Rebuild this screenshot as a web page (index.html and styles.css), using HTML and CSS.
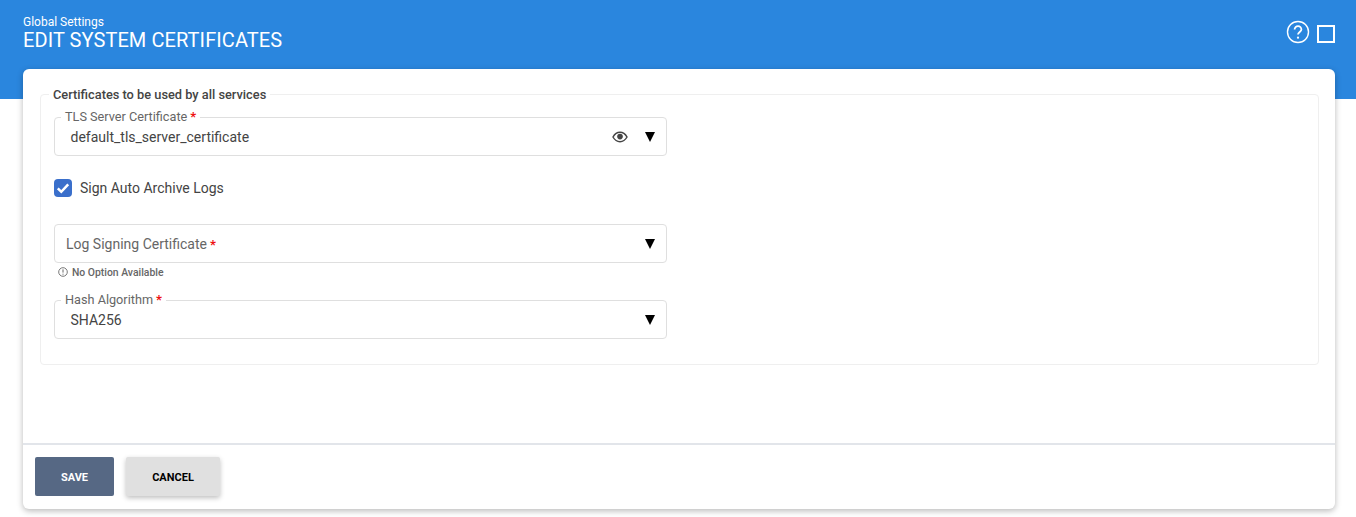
FILE: index.html
```html
<!DOCTYPE html>
<html lang="en">
<head>
<meta charset="utf-8">
<title>Edit System Certificates</title>
<link rel="stylesheet" href="styles.css">
</head>
<body>
<header class="banner">
  <div class="titles">
    <div class="crumb">Global Settings</div>
    <h1 class="title">EDIT SYSTEM CERTIFICATES</h1>
  </div>
  <div class="banner-icons">
    <svg class="help" width="24" height="24" viewBox="0 0 24 24" fill="none" stroke="#fff">
      <circle cx="12" cy="12" r="10.5" stroke-width="1.4"/>
      <path d="M8.6 9.6a3.4 3.4 0 0 1 6.8 0c0 2.3-3.4 2.6-3.4 5" stroke-width="1.8"/>
      <circle cx="12" cy="17.7" r="1.1" fill="#fff" stroke="none"/>
    </svg>
    <span class="maximize"></span>
  </div>
</header>
<main class="card">
  <div class="card-body">
    <section class="group">
      <span class="group-label">Certificates to be used by all services</span>
      <div class="field">
        <span class="float-label">TLS Server Certificate<b class="req">*</b></span>
        <span class="value">default_tls_server_certificate</span>
        <svg class="eye" width="16" height="12" viewBox="0 0 16 12">
          <path d="M1 6C2.800 2.800 5.200 1.300 8 1.300S13.200 2.800 15 6c-1.800 3.200-4.200 4.700-7 4.700S2.800 9.200 1 6Z" fill="none" stroke="#444" stroke-width="1.500"/>
          <circle cx="8" cy="5.600" r="2.800" fill="#444"/>
        </svg>
        <span class="caret"></span>
      </div>
      <label class="check-row">
        <span class="checkbox">
          <svg width="18" height="18" viewBox="0 0 18 18" fill="none"><path d="M3.800 9.300l3.500 3.500L14.200 5.400" stroke="#fff" stroke-width="2.500"/></svg>
        </span>
        <span>Sign Auto Archive Logs</span>
      </label>
      <div class="field field-empty">
        <span class="placeholder">Log Signing Certificate<b class="req">*</b></span>
        <span class="caret"></span>
      </div>
      <div class="hint">
        <svg width="10" height="10" viewBox="0 0 10 10" fill="none">
          <circle cx="5" cy="5" r="4.300" stroke="#555" stroke-width=".8"/>
          <path d="M5 2.400v3.200M5 6.700v1" stroke="#555" stroke-width=".9"/>
        </svg>
        <span>No Option Available</span>
      </div>
      <div class="field field-last">
        <span class="float-label">Hash Algorithm<b class="req">*</b></span>
        <span class="value">SHA256</span>
        <span class="caret"></span>
      </div>
    </section>
  </div>
  <footer class="card-footer">
    <button class="btn btn-primary" type="button">SAVE</button>
    <button class="btn btn-secondary" type="button">CANCEL</button>
  </footer>
</main>
</body>
</html>
```
FILE: styles.css
```css
* { box-sizing: border-box; }
html, body { margin: 0; height: 100%; }
body {
  background: #fff;
  font-family: Roboto, "Liberation Sans", sans-serif;
  color: #444;
  overflow: hidden;
}
.banner {
  height: 99px;
  background: #2a86de;
  color: #fff;
  padding: 15px 21px 0 23px;
  display: flex;
  justify-content: space-between;
  align-items: flex-start;
}
.crumb { font-size: 12px; line-height: 14px; }
.title { margin: 1px 0 0; font-size: 20px; font-weight: 400; line-height: 21px; letter-spacing: .08px; }
.banner-icons { display: flex; align-items: flex-start; gap: 7px; padding-top: 5px; }
.help { display: block; }
.maximize { width: 18px; height: 18px; margin-top: 5px; border: 2px solid #fff; }
.card {
  margin: -30px 21px 0 23px;
  height: 440px;
  background: #fff;
  border-radius: 6px;
  box-shadow: 0 2px 6px rgba(0, 0, 0, .28);
  display: flex;
  flex-direction: column;
  position: relative;
}
.card-body { flex: 1; padding: 25px 16px 0 17px; }
.group {
  position: relative;
  height: 271px;
  border: 1px solid #efefef;
  border-radius: 4px;
  padding: 22px 14px 0 13px;
}
.group-label {
  position: absolute;
  top: -7px;
  left: 8px;
  padding: 0 4px;
  background: #fff;
  font-size: 12.800px;
  line-height: 14px;
  font-weight: 500;
  color: #444;
}
.field {
  position: relative;
  width: 613px;
  height: 39px;
  border: 1px solid #dfdfdf;
  border-radius: 4px;
  display: flex;
  align-items: center;
  padding: 0 11px 0 16px;
  font-size: 14px;
}
.float-label {
  position: absolute;
  top: -9px;
  left: 6px;
  padding: 0 4px;
  background: #fff;
  font-size: 12.700px;
  line-height: 15px;
  color: #666;
}
.req { color: #e11; font-weight: 700; font-size: 13px; margin-left: 3px; }
.value { flex: 1; padding-top: 1px; margin-left: -.5px; color: #444; }
.placeholder { flex: 1; margin-left: -5px; color: #666; }
.eye { margin-right: 17px; }
.caret {
  width: 0;
  height: 0;
  border-left: 5.500px solid transparent;
  border-right: 5.500px solid transparent;
  border-top: 10px solid #000;
}
.check-row {
  display: flex;
  align-items: center;
  gap: 8px;
  height: 20px;
  margin-top: 22px;
  font-size: 14px;
  color: #444;
}
.checkbox {
  width: 18px;
  height: 18px;
  border-radius: 4px;
  background: #3a6fcb;
  display: block;
}
.checkbox svg { display: block; }
.field-empty { margin-top: 26px; }
.hint {
  display: flex;
  align-items: center;
  gap: 4px;
  height: 12px;
  margin-top: 3px;
  padding-left: 4px;
  font-size: 10.400px;
  font-weight: 500;
  color: #666;
}
.field-last { margin-top: 22px; }
.card-footer {
  height: 66px;
  border-top: 2px solid #e2e5ea;
  padding: 12px;
  display: flex;
  gap: 12px;
  align-items: flex-start;
}
.btn {
  height: 39px;
  border: 0;
  border-radius: 2px;
  font-family: inherit;
  font-size: 11px;
  font-weight: 700;
  padding: 1px 0 0;
}
.btn-primary { width: 79px; background: #566884; color: #fff; }
.btn-secondary { width: 94px; background: #e0e0e0; color: #000; box-shadow: 0 2px 5px rgba(0, 0, 0, .25); }
```
